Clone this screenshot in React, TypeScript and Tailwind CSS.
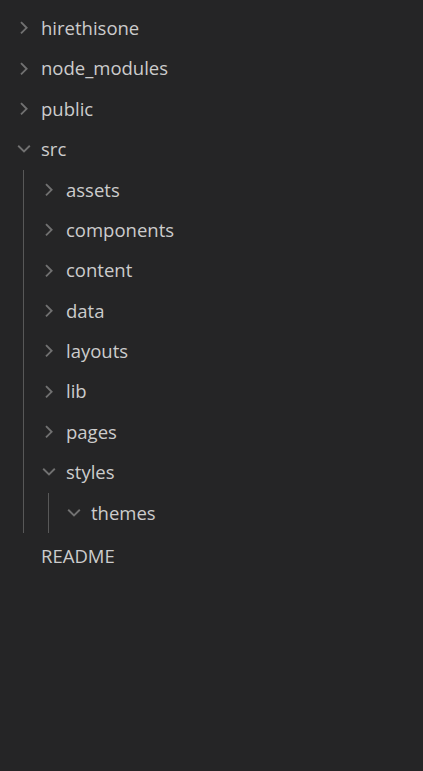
import React from "react";

type Node = {
  name: string;
  open?: boolean;
  file?: boolean;
  children?: Node[];
};

const TREE: Node[] = [
  { name: "hirethisone" },
  { name: "node_modules" },
  { name: "public" },
  {
    name: "src",
    open: true,
    children: [
      { name: "assets" },
      { name: "components" },
      { name: "content" },
      { name: "data" },
      { name: "layouts" },
      { name: "lib" },
      { name: "pages" },
      {
        name: "styles",
        open: true,
        children: [{ name: "themes", open: true, children: [] }],
      },
    ],
  },
  { name: "README", file: true },
];

const Chevron = ({ open }: { open?: boolean }) => (
  <svg width="16" height="16" viewBox="0 0 16 16" fill="none">
    {open ? (
      <path d="M2.2 4.8 L8 10.4 L13.8 4.8" stroke="#717171" strokeWidth="1.9" />
    ) : (
      <path d="M5 2.2 L10.6 7.8 L5 13.4" stroke="#717171" strokeWidth="1.9" />
    )}
  </svg>
);

// One row of the explorer, with its nested children if open.
const TreeRow = ({ node, depth }: { node: Node; depth: number }) => {
  return (
    <div>
      <div
        className={`flex items-center h-[40.4px] ${
          depth === 0 ? "pl-[16px]" : "pl-[17px]"
        } ${node.file ? "mt-[3px]" : ""}`}
      >
        <div className="w-4 h-4 flex items-center justify-center shrink-0">
          {!node.file && <Chevron open={node.open} />}
        </div>
        <span className="text-[#cccccc] text-[18.5px] leading-none ml-[9px]">
          {node.name}
        </span>
      </div>
      {node.open && node.children && node.children.length > 0 && (
        <div
          className={`border-l border-[#585858] ${
            depth === 0 ? "ml-[23px]" : "ml-[24px]"
          }`}
        >
          {node.children.map((c) => (
            <TreeRow key={c.name} node={c} depth={depth + 1} />
          ))}
        </div>
      )}
    </div>
  );
};

export default function App() {
  return (
    <div
      className="w-[423px] h-[771px] bg-[#252526] pt-[8px] overflow-hidden"
      style={{ fontFamily: '"Open Sans", "Noto Sans", sans-serif' }}
    >
      {TREE.map((n) => (
        <TreeRow key={n.name} node={n} depth={0} />
      ))}
    </div>
  );
}
